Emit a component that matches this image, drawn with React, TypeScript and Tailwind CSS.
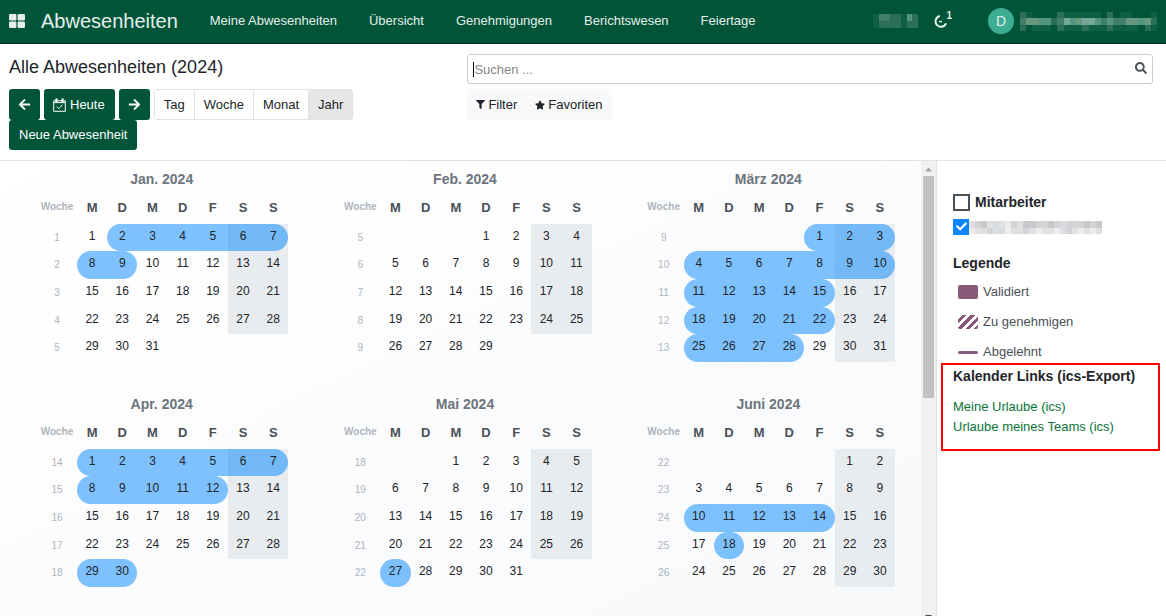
import React from "react";
import { FaArrowLeft, FaArrowRight, FaCheck, FaFilter, FaSearch, FaStar } from "react-icons/fa";

type Month = { name: string; firstWeek: number; offset: number; days: number; leave: [number, number][] };

const NAV = ["Meine Abwesenheiten", "Übersicht", "Genehmigungen", "Berichtswesen", "Feiertage"];
const WEEKDAYS = ["M", "D", "M", "D", "F", "S", "S"];
const SCALES = ["Tag", "Woche", "Monat", "Jahr"];

const MONTHS: Month[] = [
  { name: "Jan. 2024", firstWeek: 1, offset: 0, days: 31, leave: [[2, 9]] },
  { name: "Feb. 2024", firstWeek: 5, offset: 3, days: 29, leave: [] },
  { name: "März 2024", firstWeek: 9, offset: 4, days: 31, leave: [[1, 15], [18, 22], [25, 28]] },
  { name: "Apr. 2024", firstWeek: 14, offset: 0, days: 30, leave: [[1, 12], [29, 30]] },
  { name: "Mai 2024", firstWeek: 18, offset: 2, days: 31, leave: [[27, 27]] },
  { name: "Juni 2024", firstWeek: 22, offset: 5, days: 30, leave: [[10, 14], [18, 18]] },
];

const ROW_HEIGHTS = ["h-[27px]", "h-[28px]", "h-[28px]", "h-[27px]", "h-[28px]"];

const GREENS: Record<string, string> = {
  a: "#0f5f46",
  b: "#2c6f57",
  c: "#417f68",
  d: "#539680",
  e: "#68997f",
  f: "#75a794",
};
const GREYS: Record<string, string> = { a: "#ececec", b: "#e0e0e0", c: "#d2d4d7", d: "#c6c8cc", e: "#d5dde3" };

type PixelsProps = { label: string; rows: string[]; colors: Record<string, string>; width: number; height: number };

// Pixelated stand-in for names that must not be readable
function Pixels({ label, rows, colors, width, height }: PixelsProps) {
  return (
    <svg
      role="img"
      aria-label={label}
      width={width}
      height={height}
      viewBox={`0 0 ${rows[0].length} ${rows.length}`}
      preserveAspectRatio="none"
      shapeRendering="crispEdges"
    >
      {rows.map((row, y) =>
        row.split("").map((c, x) =>
          colors[c] ? <rect key={`${x}-${y}`} x={x} y={y} width="1" height="1" fill={colors[c]} /> : null
        )
      )}
    </svg>
  );
}

function Navbar() {
  return (
    <header className="flex h-11 items-center border-b border-[#0c2a1f] bg-[#005538] pr-[9px] pb-px pl-[9px] text-[#e5eeeb]">
      <button aria-label="Apps" className="mr-4">
        <svg width="16" height="14" viewBox="0 0 16 14" fill="currentColor">
          <rect width="7.4" height="6.4" rx="1.2" />
          <rect x="8.6" width="7.4" height="6.4" rx="1.2" />
          <rect y="7.6" width="7.4" height="6.4" rx="1.2" />
          <rect x="8.6" y="7.6" width="7.4" height="6.4" rx="1.2" />
        </svg>
      </button>
      <a href="#" className="mr-8 text-xl leading-6">Abwesenheiten</a>
      <nav className="flex flex-1 gap-8">
        {NAV.map((item) => (
          <a key={item} href="#">{item}</a>
        ))}
      </nav>
      <Pixels label="Status" rows={["accbbadb", "abbbbabb"]} colors={GREENS} width={45} height={14} />
      <button aria-label="Aktivitäten" className="mr-9 ml-4 flex items-start">
        <svg width="13" height="18" viewBox="0 0 13 18" fill="none" stroke="currentColor" strokeWidth="2">
          <path d="M5.8 4.1A5.4 5.4 0 1 0 12 11.4" />
          <path d="M5 9.6h3" strokeWidth="1.4" />
        </svg>
        <span className="-ml-px text-[10px] leading-2 font-bold">1</span>
      </button>
      <button className="flex items-center gap-1.5">
        <span className="flex size-[26px] items-center justify-center rounded-full bg-[#3dae94] text-sm">D</span>
        <Pixels
          label="Benutzer"
          rows={["ba....baaaaaa.b.aa...a", "ceeddbcfdeffdcdcceedeb", "b.aaa.baaabaaabaaaa.ba"]}
          colors={GREENS}
          width={137}
          height={19}
        />
      </button>
    </header>
  );
}

function ControlPanel() {
  const primary = "flex items-center rounded-[3px] bg-[#005538] text-white";
  return (
    <section className="flex border-b border-[#dee2e6] pb-2.5">
      <div className="w-2/5 pl-[9px]">
        <h1 className="mt-[11px] text-lg leading-6">Alle Abwesenheiten (2024)</h1>
        <div className="mt-2.5 flex flex-wrap gap-x-1">
          <button aria-label="Zurück" className={`${primary} h-[31px] w-[31px] justify-center`}>
            <FaArrowLeft size={13} />
          </button>
          <button className={`${primary} h-[31px] gap-1 pr-2.5 pl-[9px]`}>
            <svg width="13" height="14" viewBox="0 0 13 14" fill="none" stroke="currentColor">
              <path d="M0.7 2.8h11.6v10.5H0.7zM0.7 4.6h11.6" />
              <path d="M3.5 0.5v3.5M9.5 0.5v3.5" strokeWidth="2.2" />
              <path d="M3.8 8.6l2 2 3.6-3.8" />
            </svg>
            Heute
          </button>
          <button aria-label="Weiter" className={`${primary} h-[31px] w-[31px] justify-center`}>
            <FaArrowRight size={13} />
          </button>
          <div className="flex h-[31px] divide-x divide-[#dee2e6] overflow-hidden rounded-[3px] border border-[#dee2e6]">
            {SCALES.map((scale) => (
              <button key={scale} className={`px-[9px] ${scale === "Jahr" ? "bg-[#e6e6e6]" : "bg-white"}`}>
                {scale}
              </button>
            ))}
          </div>
          <button className={`${primary} h-[30px] px-2.5`}>Neue Abwesenheit</button>
        </div>
      </div>
      <div className="w-3/5 pt-2.5 pr-[13px] pl-px">
        <div className="flex h-[30px] items-center rounded-[3px] border border-[#ccc] pr-[5px] pl-[5px]">
          <span className="h-[15px] w-px bg-black" />
          <input aria-label="Suchen" placeholder="Suchen ..." className="flex-1 pt-0.5 outline-none placeholder:text-[#868686]" />
          <button aria-label="Suche starten" className="pb-0.5 text-[#495057]">
            <FaSearch size={12} />
          </button>
        </div>
        <div className="mt-[5px] inline-flex h-[31px] rounded-[3px] bg-[#f8f9fa]">
          <button className="flex items-center gap-[3px] pr-2.5 pl-[9px]">
            <FaFilter size={9} />
            Filter
          </button>
          <button className="flex items-center gap-[3px] pr-2.5 pl-2">
            <FaStar size={10} />
            Favoriten
          </button>
        </div>
      </div>
    </section>
  );
}

function MonthTable({ month }: { month: Month }) {
  const onLeave = (day: number) => month.leave.some(([from, to]) => day >= from && day <= to);
  return (
    <div className="h-[225px] px-[25px]">
      <h2 className="pt-2.5 text-center text-sm leading-4 font-bold text-[#6c757d]">{month.name}</h2>
      <table className="mt-2 w-full table-fixed text-center text-xs">
        <thead>
          <tr className="h-[29px] text-[13px] text-[#495057]">
            <th className="w-[42px] p-0 pb-1.5 pl-0.5 text-[10px] text-[#adb5bd]">Woche</th>
            {WEEKDAYS.map((d, i) => (
              <th key={i} className="p-0 pb-1">{d}</th>
            ))}
          </tr>
        </thead>
        <tbody>
          {ROW_HEIGHTS.map((height, week) => (
            <tr key={week}>
              <td className="p-0 pl-0.5 text-[10px] text-[#adb5bd]">{month.firstWeek + week}</td>
              {WEEKDAYS.map((_, col) => {
                const day = week * 7 + col - month.offset + 1;
                if (day < 1 || day > month.days) return <td key={col} />;
                const marked = onLeave(day);
                const start = marked && (col === 0 || !onLeave(day - 1));
                const end = marked && (col === 6 || !onLeave(day + 1));
                return (
                  <td key={col} className={`p-0 ${col > 4 ? "bg-[#e9ecef]" : ""}`}>
                    <div
                      className={`${height} leading-[25px] ${marked ? "bg-[#0085ff]/50" : ""} ${start ? "rounded-l-[14px]" : ""} ${end ? "rounded-r-[14px]" : ""}`}
                    >
                      {day}
                    </div>
                  </td>
                );
              })}
            </tr>
          ))}
        </tbody>
      </table>
    </div>
  );
}

function Scrollbar() {
  return (
    <div aria-hidden="true" className="flex w-[15px] flex-col items-center bg-[#f1f1f1]">
      <svg width="7" height="15" viewBox="0 0 7 15" className="shrink-0">
        <path d="M0 10.5L3.5 6.5L7 10.5z" fill="#a3a3a3" />
      </svg>
      <div className="h-[222px] w-[11px] bg-[#c1c1c1]" />
      <svg width="7" height="4" viewBox="0 0 7 4" className="mt-auto -mb-[3px] shrink-0">
        <path d="M0 0h7L3.5 4z" fill="#505050" />
      </svg>
    </div>
  );
}

function Sidebar() {
  return (
    <aside className="w-[230px] shrink-0 border-l border-[#dee2e6] pt-[31px] pr-1.5 pl-1 text-[#495057]">
      <div className="pl-3">
        <label className="flex items-center gap-[5px] text-sm leading-5 font-bold text-[#212529]">
          <input type="checkbox" className="size-[17px] appearance-none border-2 border-[#495057]" />
          Mitarbeiter
        </label>
        <label className="mt-[7px] flex items-center">
          <span className="grid size-4">
            <input
              type="checkbox"
              defaultChecked
              aria-label="Mitarbeiter anzeigen"
              className="col-start-1 row-start-1 size-4 appearance-none bg-[#0a87ff]"
            />
            <FaCheck size={11} className="pointer-events-none col-start-1 row-start-1 mt-[2px] justify-self-center text-white" />
          </span>
          <Pixels
            label="Name"
            rows={["bcdbebacbddccdcecccdcd", "abbcbeabbcbabbabcbabab"]}
            colors={GREYS}
            width={133}
            height={13}
          />
        </label>
        <h2 className="mt-[18px] text-sm leading-5 font-bold text-[#212529]">Legende</h2>
        <ul className="mt-1 pl-[5px]">
          <li className="flex h-[30px] items-center gap-[5px]">
            <span className="h-[14px] w-5 rounded-xs bg-[#875a7b]" />
            Validiert
          </li>
          <li className="flex h-[30px] items-center gap-[5px]">
            <span className="h-[14px] w-5 rounded-xs bg-[repeating-linear-gradient(-45deg,#875a7b_0_3px,#fff_3px_6px)]" />
            Zu genehmigen
          </li>
          <li className="flex h-[30px] items-center gap-[5px]">
            <span className="h-[3px] w-5 rounded-xs bg-[#875a7b]" />
            Abgelehnt
          </li>
        </ul>
      </div>
      <section className="-mt-1 h-[88px] border-2 border-[#f00] pl-2.5">
        <h2 className="mt-[3px] text-sm leading-4 font-bold text-[#212529]">Kalender Links (ics-Export)</h2>
        <div className="mt-[13px] flex flex-col items-start leading-5 text-[#0b7439]">
          <a href="#">Meine Urlaube (ics)</a>
          <a href="#">Urlaube meines Teams (ics)</a>
        </div>
      </section>
    </aside>
  );
}

export default function App() {
  return (
    <div className="flex h-screen flex-col overflow-hidden bg-white font-['Liberation_Sans',Arial,sans-serif] text-[13px] leading-5 text-[#212529]">
      <Navbar />
      <ControlPanel />
      <div className="flex min-h-0 flex-1">
        <main className="grid flex-1 grid-cols-3 content-start overflow-hidden bg-linear-to-br from-white to-[#f8f9fb] pr-px pl-2.5">
          {MONTHS.map((month) => (
            <MonthTable key={month.name} month={month} />
          ))}
        </main>
        <Scrollbar />
        <Sidebar />
      </div>
    </div>
  );
}
